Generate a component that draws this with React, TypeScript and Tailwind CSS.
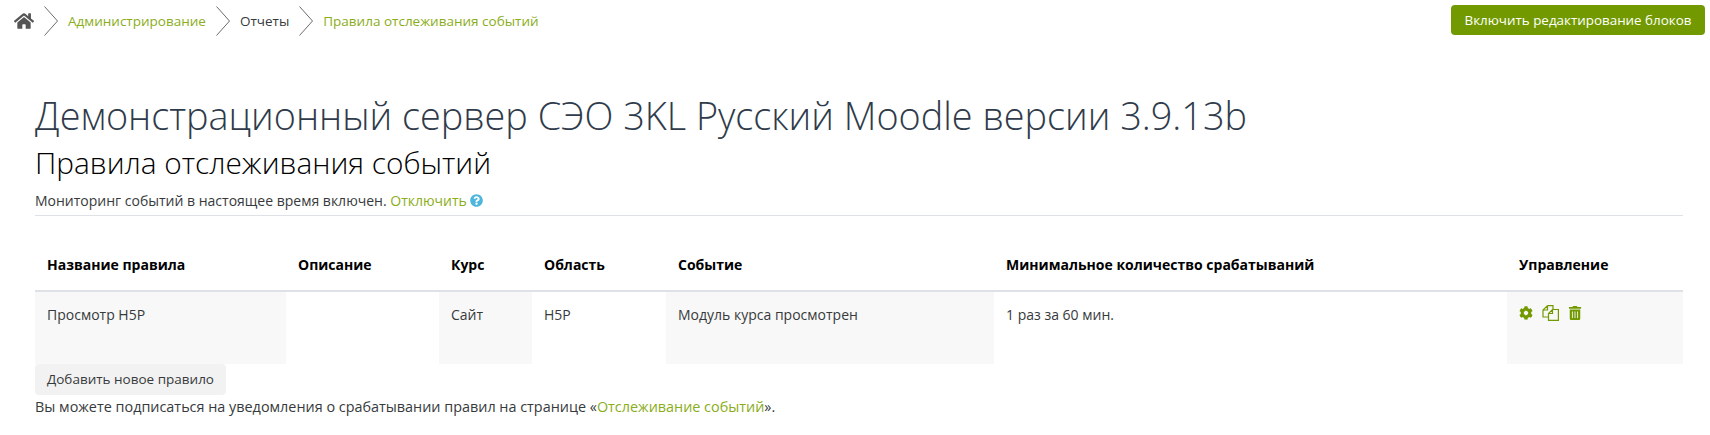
import { FaCog, FaHome, FaQuestionCircle, FaTrashAlt } from "react-icons/fa";

const Chevron = () => (
  <svg width="14" height="30" viewBox="0 0 14 30" fill="none" className="mx-[10px] shrink-0">
    <path d="M.5 .5 L13.5 15 L.5 29.5" stroke="#6b6b6b" strokeWidth="1" />
  </svg>
);

const CopyIcon = () => (
  <svg width="17" height="16" viewBox="0 0 17 16" fill="none" stroke="#729a00" strokeWidth="1.2">
    <path d="M5.5 .6 L1 5 V12 H6.5 M5.5 .6 V5 H1 M5.5 .6 H11 V4.5" />
    <path d="M10.5 4.5 H16.4 V15.4 H6.5 V8.5 Z M10.5 4.5 V8.5 H6.5" />
  </svg>
);

const columns = [
  { title: "Название правила", width: "w-[251px]" },
  { title: "Описание", width: "w-[153px]" },
  { title: "Курс", width: "w-[93px]" },
  { title: "Область", width: "w-[134px]" },
  { title: "Событие", width: "w-[328px]" },
  { title: "Минимальное количество срабатываний", width: "w-[513px]" },
];

const App = () => (
  <div className="h-[435px] overflow-hidden bg-white font-['Open_Sans','Liberation_Sans',sans-serif] text-[14px] text-[#373a3c]">
    <div className="flex items-start justify-between pl-[14px] pr-[5px] pt-[5px]">
      <nav className="mt-[1px] flex h-[30px] items-center text-[13.5px]">
        <FaHome className="text-[20px] text-[#555]" />
        <Chevron />
        <a className="text-[#8aad1a]">Администрирование</a>
        <Chevron />
        <span>Отчеты</span>
        <Chevron />
        <a className="text-[#8aad1a]">Правила отслеживания событий</a>
      </nav>
      <button className="h-[30px] w-[254px] rounded-[4px] bg-[#729a00] text-[13.4px] text-white">
        Включить редактирование блоков
      </button>
    </div>

    <div className="mx-[35px] mt-[55px] w-[1648px]">
      <h1 className="text-[37.8px] leading-[50px] font-light text-[#2f3b4a]">Демонстрационный сервер СЭО 3KL Русский Moodle версии 3.9.13b</h1>
      <h2 className="mt-[4px] text-[29.8px] leading-[36px] font-light text-black">Правила отслеживания событий</h2>
      <p className="mt-[8px] flex h-[22px] items-center">
        Мониторинг событий в настоящее время включен.&nbsp;
        <a className="text-[#8aad1a]">Отключить</a>
        <FaQuestionCircle className="ml-[3px] text-[13px] text-[#4db6dc]" />
      </p>
      <div className="mt-[4px] border-t border-[#dee2e6]" />

      <table className="mt-[25px] w-full table-fixed border-collapse">
        <thead>
          <tr className="h-[49px] border-b-2 border-[#dee2e6]">
            {columns.map((c) => (
              <th key={c.title} className={`${c.width} px-[12px] pt-[14px] pb-[15px] text-left text-[14px] leading-[20px] font-bold text-black`}>{c.title}</th>
            ))}
            <th className="px-[12px] pt-[14px] pb-[15px] text-left text-[14px] leading-[20px] font-bold text-black">Управление</th>
          </tr>
        </thead>
        <tbody>
          <tr className="h-[73px]">
            <td className="bg-[#f8f8f8] px-[12px] pt-[12px] align-top">Просмотр H5P</td>
            <td className="bg-white px-[12px] pt-[12px] align-top"></td>
            <td className="bg-[#f8f8f8] px-[12px] pt-[12px] align-top">Сайт</td>
            <td className="bg-white px-[12px] pt-[12px] align-top">H5P</td>
            <td className="bg-[#f8f8f8] px-[12px] pt-[12px] align-top">Модуль курса просмотрен</td>
            <td className="bg-white px-[12px] pt-[12px] align-top">1 раз за 60 мин.</td>
            <td className="bg-[#f8f8f8] px-[12px] pt-[13px] align-top">
              <div className="flex items-center gap-[9px] text-[#729a00]">
                <FaCog className="text-[14px]" />
                <CopyIcon />
                <FaTrashAlt className="text-[14px]" />
              </div>
            </td>
          </tr>
        </tbody>
      </table>

      <button className="block h-[31px] w-[191px] rounded-[4px] bg-[#f2f2f2] text-[13.5px]">Добавить новое правило</button>
      <p className="mt-[1px] text-[14.4px] leading-[21px]">
        Вы можете подписаться на уведомления о срабатывании правил на странице «<a className="text-[#8aad1a]">Отслеживание событий</a>».
      </p>
    </div>
  </div>
);

export default App;
